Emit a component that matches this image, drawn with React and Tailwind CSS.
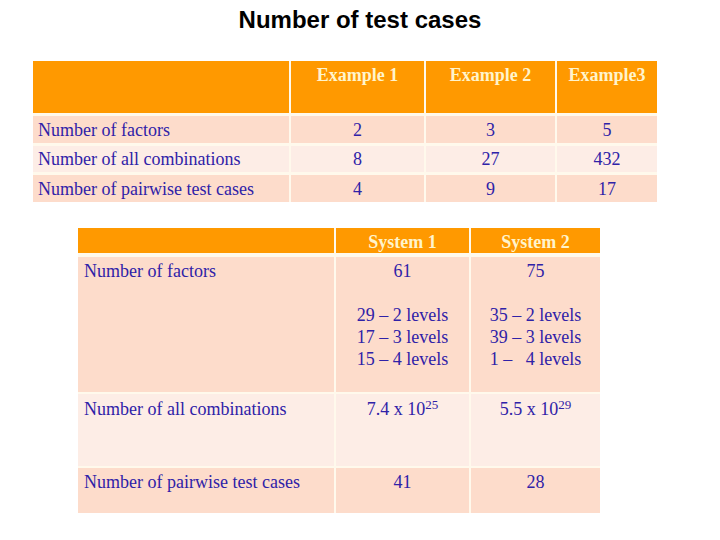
import React from 'react'

const serif = { fontFamily: '"Liberation Serif", "Times New Roman", serif' }

const top = [
  ['Number of factors', '2', '3', '5'],
  ['Number of all combinations', '8', '27', '432'],
  ['Number of pairwise test cases', '4', '9', '17'],
]

function Head({ children }) {
  return (
    <div className="bg-[#ff9900] text-[#fff4cc] font-bold text-center pt-[3px] leading-[22px]">
      {children}
    </div>
  )
}

function Pow({ base, exp }) {
  return (
    <>
      {base}
      <span className="text-[13px] relative top-[-6px]">{exp}</span>
    </>
  )
}

export default function App() {
  return (
    <div className="w-[720px] h-[540px] bg-white overflow-hidden">
      <div
        className="h-[61px] pt-[5px] text-center text-[24px] leading-[30px] font-bold text-black"
        style={{ fontFamily: '"Liberation Sans", Arial, sans-serif' }}
      >
        Number of test cases
      </div>

      <div
        className="ml-[33px] w-[624px] grid grid-cols-[256px_133px_129px_100px] grid-rows-[52px_27px_26px_27px] gap-x-[2px] gap-y-[3px] bg-[#fff9ec] text-[18px] text-[#2f22a8]"
        style={serif}
      >
        <Head />
        <Head>Example 1</Head>
        <Head>Example 2</Head>
        <Head>Example3</Head>
        {top.map((row, i) => (
          <React.Fragment key={row[0]}>
            {row.map((c, j) => (
              <div
                key={j}
                className={`${i === 1 ? 'bg-[#fdede6]' : 'bg-[#fddccb]'} flex items-center leading-[22px] ${j === 0 ? 'pl-[5px]' : 'justify-center'}`}
              >
                {c}
              </div>
            ))}
          </React.Fragment>
        ))}
      </div>

      <div
        className="mt-[26px] ml-[78px] w-[522px] bg-[#fff9ec] text-[18px] text-[#2f22a8]"
        style={serif}
      >
        <div className="grid grid-cols-[256px_133px_129px] h-[25px] gap-x-[2px] mb-[4px]">
          <Head />
          <Head>System 1</Head>
          <Head>System 2</Head>
        </div>
        <div className="grid grid-cols-[256px_133px_129px] grid-rows-[135px_72px_45px] gap-x-[2px] gap-y-[2px] leading-[22px]">
          <div className="bg-[#fddccb] pt-[3px] pl-[6px]">Number of factors</div>
          <div className="bg-[#fddccb] pt-[3px] text-center">
            <div>61</div>
            <div className="h-[22px]" />
            <div>29 – 2 levels</div>
            <div>17 – 3 levels</div>
            <div>15 – 4 levels</div>
          </div>
          <div className="bg-[#fddccb] pt-[3px] text-center">
            <div>75</div>
            <div className="h-[22px]" />
            <div>35 – 2 levels</div>
            <div>39 – 3 levels</div>
            <div className="whitespace-pre">1 –   4 levels</div>
          </div>

          <div className="bg-[#fdede6] pt-[4px] pl-[6px]">Number of all combinations</div>
          <div className="bg-[#fdede6] pt-[4px] text-center">
            <Pow base="7.4 x 10" exp="25" />
          </div>
          <div className="bg-[#fdede6] pt-[4px] text-center">
            <Pow base="5.5 x 10" exp="29" />
          </div>

          <div className="bg-[#fddccb] pt-[3px] pl-[6px]">Number of pairwise test cases</div>
          <div className="bg-[#fddccb] pt-[3px] text-center">41</div>
          <div className="bg-[#fddccb] pt-[3px] text-center">28</div>
        </div>
      </div>
    </div>
  )
}
